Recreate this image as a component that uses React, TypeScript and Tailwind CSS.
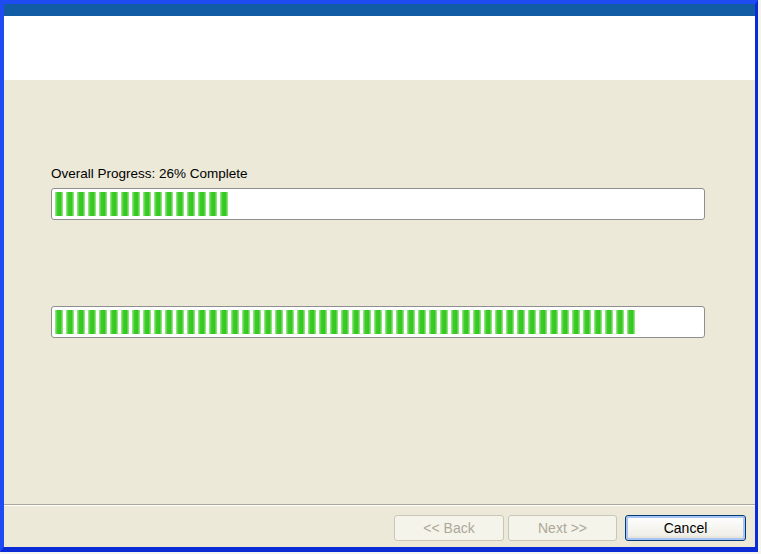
import React from 'react'

const font = { fontFamily: '"Liberation Sans", Arial, sans-serif' }

const ProgressBar = ({ segments }: { segments: number }) => (
  <div className="h-[32px] w-[654px] rounded-[3px] border border-[#8e8f8f] bg-white pl-[3px] pt-[3px]">
    <div className="flex gap-[3px]">
      {Array.from({ length: segments }).map((_, i) => (
        <div
          key={i}
          className="h-[24px] w-[8px] bg-[linear-gradient(to_right,#a6e897,#3ccd27_30%,#34c720_70%,#a6e897)]"
        />
      ))}
    </div>
  </div>
)

export default function App() {
  return (
    <div className="h-[554px] w-[761px] overflow-hidden bg-[#f3f3ef]" style={font}>
      <div className="flex h-[552px] w-[758px] flex-col border-b-[5px] border-l-4 border-r-[3px] border-t-4 border-b-[#0b2bd6] border-l-[#1f4cf2] border-r-[#0b2bd6] border-t-[#1f4cf2]">
        <div className="h-[12px] bg-[#125ca6]" />
        <div className="h-[64px] bg-white" />
        <div className="flex flex-1 flex-col bg-[#ece9d8] pl-[47px] pt-[86px]">
          <div className="h-[16px] text-[13.5px] leading-[16px] text-black">Overall Progress: 26% Complete</div>
          <div className="mt-[6px]">
            <ProgressBar segments={16} />
          </div>
          <div className="mt-[86px]">
            <ProgressBar segments={53} />
          </div>
        </div>
        <div className="h-[2px] border-b border-t border-b-white border-t-[#aca899]" />
        <div className="flex h-[41px] justify-end bg-[#ece9d8] pr-[9px] pt-[9px]">
          <button className="h-[26px] w-[110px] rounded-[3px] border border-[#c9c7ba] bg-[#f5f4ea] text-[14px] text-[#aca899]">
            &lt;&lt; Back
          </button>
          <button className="ml-[4px] h-[26px] w-[109px] rounded-[3px] border border-[#c9c7ba] bg-[#f5f4ea] text-[14px] text-[#aca899]">
            Next &gt;&gt;
          </button>
          <button className="ml-[8px] h-[26px] w-[121px] rounded-[3px] border border-[#003c74] bg-[linear-gradient(to_bottom,#ffffff,#f0efe8_80%,#dcd9cc)] text-[14px] text-black shadow-[inset_0_0_0_2px_#a9c4f4]">
            Cancel
          </button>
        </div>
      </div>
    </div>
  )
}
